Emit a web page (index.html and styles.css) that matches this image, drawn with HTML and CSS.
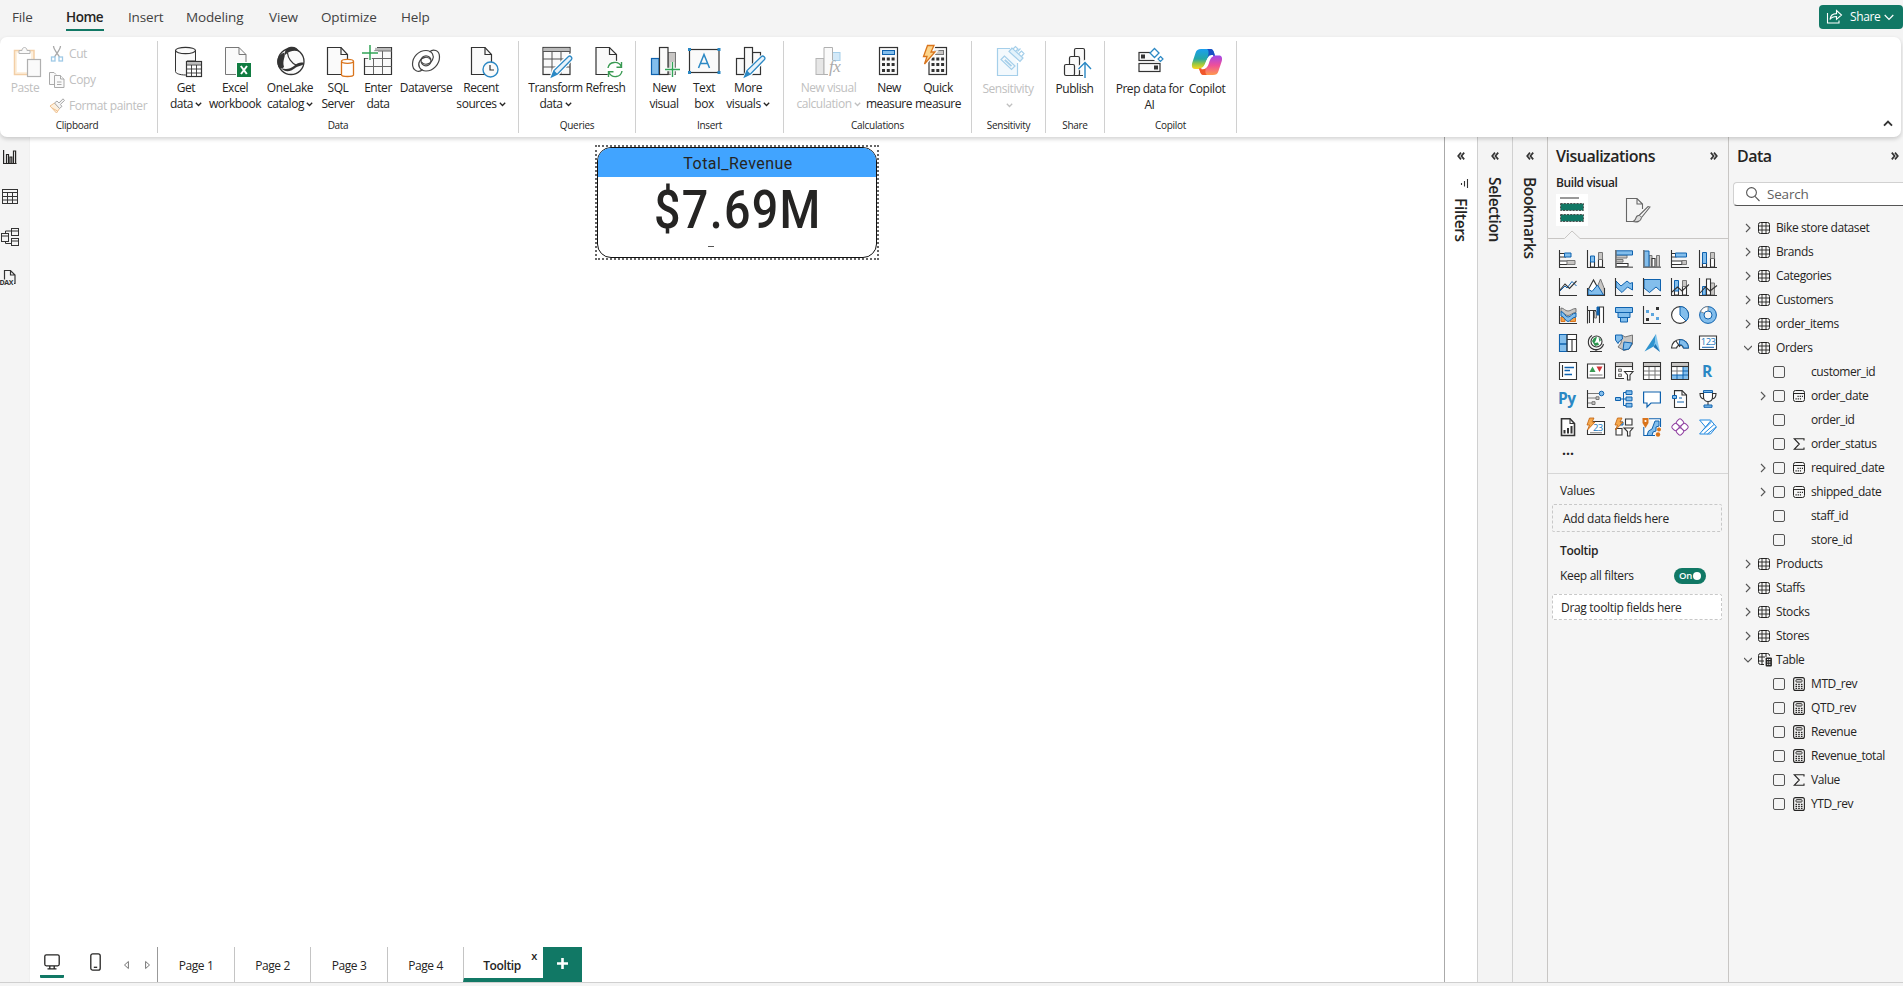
FILE: index.html
```html
<!DOCTYPE html>
<html lang="en">
<head>
<meta charset="utf-8">
<title>Report</title>
<link rel="stylesheet" href="styles.css">
</head>
<body>
<svg class="defs" width="0" height="0">
  <symbol id="chev" viewBox="0 0 7 5"><path d="M.8 .8L3.5 3.5L6.2 .8" fill="none" stroke="currentColor" stroke-width="1.3"/></symbol>
  <symbol id="right" viewBox="0 0 8 10"><path d="M2 1L6 5L2 9" fill="none" stroke="#555" stroke-width="1.1"/></symbol>
  <symbol id="down" viewBox="0 0 8 10"><path d="M0 3L4 7L8 3" fill="none" stroke="#555" stroke-width="1.1"/></symbol>
  <symbol id="dbl" viewBox="0 0 8 8"><path d="M.8 .6L3.6 4L.8 7.4M4 .6L6.8 4L4 7.4" fill="none" stroke="#333" stroke-width="1.7"/></symbol>
  <symbol id="tbl" viewBox="0 0 12 12"><rect x=".5" y=".5" width="11" height="11" rx="2" fill="none" stroke="#252423"/><path d="M4 .5V11.5M8 .5V11.5M.5 4H11.5M.5 8H11.5" stroke="#252423" stroke-width=".9"/></symbol>
  <symbol id="tblcalc" viewBox="0 0 15 14"><path d="M6 11.500H2.500A2 2 0 0 1 .5 9.500V2.500A2 2 0 0 1 2.500 .5H9.500A2 2 0 0 1 11.500 2.500V3M4 .5V11.500M8 .5V4M.5 4H7M.5 8H6" fill="none" stroke="#252423"/><rect x="7.600" y="4.600" width="6.300" height="8.900" rx="1" fill="#252423"/><path d="M9 6.500H12.600M9 9H12.800M9 11.300H12.800" stroke="#f5f5f5" stroke-width="1" stroke-dasharray="1.400 .6"/></symbol>
  <symbol id="cal" viewBox="0 0 12 12"><rect x=".5" y=".5" width="11" height="11" rx="2" fill="none" stroke="#252423"/><path d="M.5 3.500H11.500" stroke="#252423"/><path d="M4.500 6.300H10M2.500 8.800H8" stroke="#252423" stroke-width="1.200" stroke-dasharray="1.200 1"/></symbol>
  <symbol id="calc" viewBox="0 0 12 14"><rect x=".6" y=".6" width="10.800" height="12.800" rx="2" fill="none" stroke="#252423" stroke-width="1.100"/><rect x="3" y="2.700" width="6" height="2.300" rx=".6" fill="none" stroke="#252423"/><path d="M2.500 7.300H9.500M2.500 9.300H9.500M2.500 11.300H9.500" stroke="#252423" stroke-width="1.200" stroke-dasharray="1.600 1.100"/></symbol>
  <symbol id="sum" viewBox="0 0 12 12"><path d="M11 2.500V.7H1.200L6.300 6L1.200 11.300H11V9.500" fill="none" stroke="#252423" stroke-width="1.100"/></symbol>
</svg>

<header class="menu">
  <nav class="menu-tabs">
    <span class="menu-tab t-file">File</span><span class="menu-tab t-home">Home</span><span class="menu-tab t-insert">Insert</span><span class="menu-tab t-modeling">Modeling</span><span class="menu-tab t-view">View</span><span class="menu-tab t-optimize">Optimize</span><span class="menu-tab t-help">Help</span>
  </nav>
  <div class="share">
    <svg width="17" height="16" viewBox="0 0 17 16" fill="none" stroke="#fff" stroke-width="1.100"><path d="M1.500 4V14H13V11.500"/><path d="M4 10.500C4.500 6.500 7 4.600 10.500 4.600V1.500L15.500 6L10.500 10.300V7.500C7.500 7.500 5.500 8.300 4 10.500Z"/></svg>
    <span>Share</span>
    <svg width="10" height="7" viewBox="0 0 10 7"><path d="M.7 1L5 5.400L9.300 1" fill="none" stroke="#fff" stroke-width="1.200"/></svg>
  </div>
</header>

<section class="ribbon">
  <div class="group g-clip">
    <div class="items">
      <div class="item w50 off"><svg class="ico" viewBox="0 0 32 32"><rect x="5.500" y="4.500" width="19.500" height="24" fill="#fdf0de" stroke="#f3cfa6" stroke-width="1.500"/><rect x="8" y="7" width="14" height="19" fill="#fff"/><path d="M10 7.500V4.500H13C13 .5 18 .5 18 4.500H21V7.500Z" fill="#fafafa" stroke="#b5b5b5"/><rect x="18.500" y="13.500" width="13" height="17" fill="#fafafa" stroke="#b0b0b0" stroke-width="1.200"/></svg>Paste</div>
      <div class="clip-list off">
        <div class="clip-row"><svg width="16" height="16" viewBox="0 0 16 16" fill="none"><path d="M4.500 0C4.500 3 8 7 10.500 11M11.500 0C11.500 3 8 7 5.500 11" stroke="#a9a9a9" stroke-width="1.300"/><rect x="2.500" y="11" width="3.500" height="4" stroke="#9ec9e6" stroke-width="1.300"/><rect x="10" y="11" width="3.500" height="4" stroke="#9ec9e6" stroke-width="1.300"/></svg>Cut</div>
        <div class="clip-row"><svg width="16" height="16" viewBox="0 0 16 16" fill="#fafafa" stroke="#a9a9a9"><path d="M5 12.500H.5V.5H5L7 2.500"/><path d="M5.500 3.500H11.500L15 7V15.500H5.500Z"/><path d="M11.500 3.500V7H15M8 10H12.500M8 12.500H12.500"/></svg>Copy</div>
        <div class="clip-row"><svg width="16" height="16" viewBox="0 0 16 16"><path d="M1 8L5.500 5L10.500 10.500L7.500 15Z" fill="#fdf0de" stroke="#efc08e"/><path d="M3 10L8.500 13" stroke="#efc08e"/><path d="M5.500 5L8 3L10 5L14 .8L15.500 2.500L11.300 6.500L13 8.300L10.500 10.500Z" fill="#f5f5f5" stroke="#a9a9a9"/></svg>Format painter</div>
      </div>
    </div>
    <div class="glabel">Clipboard</div>
  </div>

  <div class="group g-data">
    <div class="items">
      <div class="item w40"><svg class="ico" viewBox="0 0 32 32"><path d="M5.500 4.500V25.500C5.500 27.500 10 29 15.500 29H17V15H25.500V4.500" fill="#fafafa" stroke="#333"/><ellipse cx="15.500" cy="4.500" rx="10" ry="3.200" fill="#fafafa" stroke="#333" stroke-width="1.200"/><rect x="16.500" y="15.500" width="15" height="15" fill="#fff" stroke="#333" stroke-width="1.200"/><path d="M17 17.300H31" stroke="#bbb" stroke-width="2.500"/><path d="M17 19H31M17 23H31M17 27H31M21.500 19V30M26.500 19V30" stroke="#333" stroke-width=".9"/></svg>Get<br><span>data<svg class="cv"><use href="#chev"/></svg></span></div>
      <div class="item w58"><svg class="ico" viewBox="0 0 32 32"><path d="M6.500 1.500H20L27 8.500V28.500H6.500Z" fill="#fafafa" stroke="#777"/><path d="M20 1.500V8.500H27" fill="none" stroke="#777"/><rect x="17" y="16" width="15" height="15" fill="#fff"/><rect x="18" y="17" width="14" height="14" fill="#107c41"/><path d="M21.800 20L27.800 28M28 20L22 28" stroke="#fff" stroke-width="2"/></svg>Excel<br>workbook</div>
      <div class="item w52"><svg class="ico" viewBox="0 0 32 32"><circle cx="17" cy="15.500" r="13" fill="#fafafa" stroke="#333" stroke-width="1.300"/><path d="M11 6C12 2 15 .8 18 .8C21.500 .8 24 2.500 25 5.500C20 4 15.500 5 11 9Z" fill="#333"/><path d="M10.500 6.500C12 11 8 14 10 21C8.500 23 6 22.500 4.500 21C1.500 15 3.500 9 10.500 6.500Z" fill="#333"/><path d="M13.500 7C14 12 17.500 17 22 19" fill="none" stroke="#333" stroke-width="1.200"/><path d="M7 22C12 24 16 23 20 20C24 16.500 27 16 30 17C29.500 20 24 19.500 20.500 22.500C17 25.500 11 27 7 22Z" fill="#333"/></svg>OneLake<br><span>catalog<svg class="cv"><use href="#chev"/></svg></span></div>
      <div class="item w44"><svg class="ico" viewBox="0 0 32 32"><path d="M5.500 1.500H19L25.500 8.500V28.500H5.500Z" fill="#fafafa" stroke="#333" stroke-width="1.200"/><path d="M19 1.500V8.500H25.500" fill="none" stroke="#333" stroke-width="1.200"/><path d="M19.500 15.500V29C20 31 31 31 31.500 29V15.500" fill="#fff" stroke="#d9741c" stroke-width="1.300"/><ellipse cx="25.500" cy="15.300" rx="6" ry="2" fill="#fff" stroke="#d9741c" stroke-width="1.300"/></svg>SQL<br>Server</div>
      <div class="item w36"><svg class="ico" viewBox="0 0 32 32"><path d="M2.500 12V28.500H29.500V1.500H15" fill="#fafafa" stroke="#333" stroke-width="1.200"/><path d="M13 3.300H29" stroke="#bbb" stroke-width="3"/><path d="M12 5H30M3 12.500H29.500M3 20.500H29.500M11.500 12V28M20.500 5V28" stroke="#666" stroke-width="1"/><path d="M0 7H16M8 -1V14" stroke="#fff" stroke-width="3.500"/><path d="M0 7H16M8 -1V14" stroke="#32a457" stroke-width="1.500"/></svg>Enter<br>data</div>
      <div class="item w60"><svg class="ico" viewBox="0 0 32 32" fill="none" stroke="#444" stroke-width="1.200"><path d="M19.500 6C23 2.500 29.500 4 29.500 11C29.500 18 23.500 25 16 25C9.500 25 7.500 19 9.500 15.500C12 10.500 18 10 20.500 13.500"/><path d="M12.500 23.500C9 27 2.500 25 2.500 18C2.500 11 8.500 4.500 16 4.500C22.500 4.500 24.500 10 22.500 13.800C20 19 14 19.500 11.500 16"/><circle cx="16" cy="14.800" r="5"/></svg>Dataverse</div>
      <div class="item w50"><svg class="ico" viewBox="0 0 32 32"><path d="M6.500 1.500H20L26.500 8.500V28.500H6.500Z" fill="#fafafa" stroke="#333" stroke-width="1.200"/><path d="M20 1.500V8.500H26.500" fill="none" stroke="#333" stroke-width="1.200"/><circle cx="25.500" cy="23.500" r="7.500" fill="#fafafa" stroke="#2b88c4" stroke-width="1.400"/><path d="M25 19V24H29" fill="none" stroke="#333" stroke-width="1.200"/></svg>Recent<br><span>sources<svg class="cv"><use href="#chev"/></svg></span></div>
    </div>
    <div class="glabel">Data</div>
  </div>

  <div class="group g-queries">
    <div class="items">
      <div class="item w55"><svg class="ico" viewBox="0 0 32 32"><rect x="3" y="1.500" width="27" height="27" fill="#fafafa" stroke="#333" stroke-width="1.200"/><path d="M3.500 3.500H29.500" stroke="#bbb" stroke-width="3.500"/><path d="M3 5.500H30M3 13H30M3 21H30M12 5.500V28M21 5.500V28" stroke="#555" stroke-width="1"/><path d="M31 9C32.500 10 33 12 31.500 13.500L17.500 28.500L11 31.500L13.500 24.500L28 10Z" fill="#fff" stroke="#fff" stroke-width="3"/><path d="M28.500 10.500C30 9 33 11.500 31.500 13.500L17.500 28L11.500 31L14 24.500Z" fill="#e8f3fb" stroke="#2b88c4" stroke-width="1.300"/><path d="M14 24.500L17.500 28L11.500 31Z" fill="#2b88c4"/></svg>Transform<br><span>data<svg class="cv"><use href="#chev"/></svg></span></div>
      <div class="item w45"><svg class="ico" viewBox="0 0 32 32"><path d="M6 1.500H19.500L26.500 8.500V28.500H6Z" fill="#fafafa" stroke="#333" stroke-width="1.200"/><path d="M19.500 1.500V8.500H26.500" fill="none" stroke="#333" stroke-width="1.200"/><circle cx="25" cy="23.500" r="9" fill="#fff"/><path d="M18 22C19 15.500 28.500 14 31.500 21M31.500 16V21.200H26.500M32 25C31 31.500 22 33 18.500 26M18.500 31V25.800H23.500" fill="none" stroke="#3a9a53" stroke-width="1.400"/></svg>Refresh</div>
    </div>
    <div class="glabel">Queries</div>
  </div>

  <div class="group g-insert">
    <div class="items">
      <div class="item w40"><svg class="ico" viewBox="0 0 32 32"><rect x="3.500" y="12.500" width="7.500" height="16" fill="#83beec" stroke="#0f62ae" stroke-width="1.200"/><rect x="20" y="6.500" width="7.500" height="22" fill="#c8c6c4" stroke="#777"/><rect x="11.500" y="1.500" width="8.500" height="27" fill="#fafafa" stroke="#333" stroke-width="1.200"/><path d="M17 23.500H32M24.500 16V31" stroke="#fff" stroke-width="3.500"/><path d="M17 23.500H32M24.500 16V31" stroke="#32a457" stroke-width="1.400"/></svg>New<br>visual</div>
      <div class="item w40"><svg class="ico" viewBox="0 0 32 32"><rect x="1.500" y="3.500" width="29.500" height="23" fill="#fafafa" stroke="#333" stroke-width="1.200"/><path d="M0 2h3v3h-3zM29.500 2h3v3h-3zM0 25h3v3h-3zM29.500 25h3v3h-3z" fill="#2b88c4"/><path d="M10.500 22L16 8.500L21.500 22M12.300 17.500H19.700" fill="none" stroke="#2b88c4" stroke-width="1.500"/></svg>Text<br>box</div>
      <div class="item w48"><svg class="ico" viewBox="0 0 32 32"><rect x="4.500" y="12.500" width="8" height="16" fill="#fafafa" stroke="#333" stroke-width="1.200"/><rect x="20.500" y="6.500" width="8" height="22" fill="#fafafa" stroke="#333" stroke-width="1.200"/><rect x="12.500" y="1.500" width="8" height="27" fill="#fafafa" stroke="#333" stroke-width="1.200"/><path d="M29.500 10.500L15 25L12.500 31L18.500 28.500L33 13.500Z" fill="#fff" stroke="#fff" stroke-width="3"/><path d="M29.500 10.500C31 9 34 11.500 32.500 13.500L18.500 28L12.500 31L15 24.500Z" fill="#e8f3fb" stroke="#2b88c4" stroke-width="1.300"/><path d="M15 24.500L18.500 28L12.500 31Z" fill="#2b88c4"/></svg>More<br><span>visuals<svg class="cv"><use href="#chev"/></svg></span></div>
    </div>
    <div class="glabel">Insert</div>
  </div>

  <div class="group g-calc">
    <div class="items">
      <div class="item w71 off"><svg class="ico" viewBox="0 0 32 32"><rect x="3" y="12.500" width="8" height="16" fill="#e6e6e6" stroke="#b5b5b5"/><rect x="19.500" y="6.500" width="7.500" height="8" fill="#d3e9f8" stroke="#a5cfea"/><path d="M19.500 14V1.500H11V28.500H15" fill="#fafafa" stroke="#b0b0b0"/><text class="fx" x="16" y="26">fx</text></svg>New visual<br><span>calculation<svg class="cv"><use href="#chev"/></svg></span></div>
      <div class="item w50"><svg class="ico" viewBox="0 0 32 32"><rect x="6.500" y="1.500" width="18" height="27" fill="#fafafa" stroke="#333" stroke-width="1.200"/><rect x="9.500" y="4.500" width="12" height="4" fill="#83beec" stroke="#0f62ae"/><path d="M9 13H23M9 18.500H23M9 24.500H23" stroke="#333" stroke-width="3" stroke-dasharray="3 1.800"/></svg>New<br>measure</div>
      <div class="item w48"><svg class="ico" viewBox="0 0 32 32"><rect x="7" y="1.500" width="17.500" height="27" fill="#fafafa" stroke="#333" stroke-width="1.200"/><rect x="12" y="4.500" width="9.500" height="4" fill="#c8c6c4" stroke="#777"/><path d="M9.500 13H23.500M9.500 18.500H23.500M9.500 24.500H23.500" stroke="#333" stroke-width="3" stroke-dasharray="3 1.800"/><path d="M5.500 -.5H12L9 6H13L2.500 18L5 10.500H1.500Z" fill="#fde0a4" stroke="#fff" stroke-width="3.500"/><path d="M5.500 -.5H12L9 6H13L2.500 18L5 10.500H1.500Z" fill="#fcd58c" stroke="#d9741c" stroke-width="1.300"/></svg>Quick<br>measure</div>
    </div>
    <div class="glabel">Calculations</div>
  </div>

  <div class="group g-sens">
    <div class="items">
      <div class="item w56 off low"><svg class="ico" viewBox="0 0 32 32" fill="#f3f9fd" stroke="#a5cfea" stroke-width="1.200"><path d="M18 2.500H5.500V29.500H25.500V17"/><path d="M12.500 10L9 13.500L19.500 23.500L23 20Z"/><path d="M12.800 13.800L19.500 20.200" stroke-width="1.800"/><path d="M20 2L17 5.500L28 15.500L31 12Z" fill="#e3f2fb"/><path d="M21 3L23.500 .5L26 3L23.500 5.500M29.500 10.500L32 7.500L29.500 5L27 7.500M25.500 5.500L28.500 2.500" fill="none"/></svg>Sensitivity<br><svg class="cv"><use href="#chev"/></svg></div>
    </div>
    <div class="glabel">Sensitivity</div>
  </div>

  <div class="group g-share">
    <div class="items">
      <div class="item w45 low"><svg class="ico" viewBox="0 0 32 32"><rect x="15.500" y="2.500" width="10" height="27" rx="1.500" fill="#fafafa" stroke="#333" stroke-width="1.200"/><rect x="10.500" y="10.500" width="10" height="19" rx="1.500" fill="#fafafa" stroke="#333" stroke-width="1.200"/><rect x="5.500" y="18.500" width="10" height="11" rx="1.500" fill="#fafafa" stroke="#333" stroke-width="1.200"/><path d="M26 16V32M19.500 23L26 16.500L32 23" fill="none" stroke="#fff" stroke-width="4"/><path d="M26 16V32M19.500 23L26 16.500L32 23" fill="none" stroke="#2b88c4" stroke-width="1.400"/></svg>Publish</div>
    </div>
    <div class="glabel">Share</div>
  </div>

  <div class="group g-copilot">
    <div class="items">
      <div class="item w73 low"><svg class="ico" viewBox="0 0 32 32"><rect x="5" y="6.500" width="21" height="8" fill="#fafafa" stroke="#333" stroke-width="1.200"/><rect x="5" y="17.500" width="21" height="8" fill="#fafafa" stroke="#333" stroke-width="1.200"/><path d="M7 8.500h4v4h-4zM20 19.500h4v4h-4z" fill="#333"/><path d="M16 1h14v14h-9l-5-5z" fill="#fff"/><path d="M20.500 2.500L25 7L20.500 11.500L16 7Z" fill="#fff" stroke="#2b88c4" stroke-width="1.300"/><path d="M26.500 10.500L29 13L26.500 15.500L24 13Z" fill="#fff" stroke="#2b88c4" stroke-width="1.200"/></svg>Prep data for<br>AI</div>
      <div class="item w42 low"><svg class="ico" viewBox="0 0 32 32"><defs><linearGradient id="cpa" x1="0" y1="0" x2="0" y2="1"><stop offset="0" stop-color="#1a9ff0"/><stop offset=".5" stop-color="#24a7a5"/><stop offset=".75" stop-color="#9cc83f"/><stop offset="1" stop-color="#ffd51e"/></linearGradient><linearGradient id="cpb" x1="0" y1="0" x2="0" y2="1"><stop offset="0" stop-color="#a348ea"/><stop offset=".5" stop-color="#ee4f9a"/><stop offset="1" stop-color="#ff9a4d"/></linearGradient></defs><path d="M10 3H19C21.500 3 22.500 5 23 7L24 10H20C17 10 16 13 15 16.500C13.500 21 12.500 23 9 23H4C1 23 .5 20 1.200 17L4.500 7C5.500 4 7 3 10 3Z" fill="url(#cpa)"/><path d="M16 3H19.500C22 3 22.500 5 23.200 7L24 10H20C18 10 17 11 16.500 12C18 8 18 4 16 3Z" fill="#1a4fc4"/><path d="M22 29H13C10.500 29 9.500 27 9 25L8 22.500H12C15 22 16 19 17 15.500C18.500 11 19.500 9.500 23 9.500H28C31 9.500 31.500 12 30.800 15L27.500 25C26.500 28 25 29 22 29Z" fill="url(#cpb)"/><path d="M16 29H12.500C10 29 9.500 27 8.800 25L8 22.500H12C14 22.500 15 21 15.500 20C14 24 14 28 16 29Z" fill="#f0562b"/><path d="M17.500 12C18 10.500 19 9.800 20.500 9.800H22C19 10.500 18.500 13 17.500 16C16.500 20 15.500 22.300 12 22.500H10.500C13.500 22 14.500 19 15.500 16Z" fill="#fff" stroke="#fff" stroke-width="1.500"/></svg>Copilot</div>
    </div>
    <div class="glabel">Copilot</div>
  </div>
  <svg class="collapse" width="10" height="7" viewBox="0 0 10 7"><path d="M1 5.700L5 1.700L9 5.700" fill="none" stroke="#333" stroke-width="1.900"/></svg>
</section>

<main class="work">
  <nav class="rail">
    <svg width="14" height="15" viewBox="0 0 14 15" fill="none" stroke="#252423" stroke-width="1.200"><path d="M.6 0V13.500H13.500"/><path d="M3.500 13.500V4.500H5.500V13.500M7 13.500V7H8.800V13.500M10.500 13.500V1H12.600V13.500"/></svg>
    <svg width="16" height="15" viewBox="0 0 16 15" fill="none" stroke="#333"><rect x=".5" y=".5" width="15" height="14"/><path d="M.5 3.500H15.500M.5 7.500H15.500M.5 11H15.500M5.500 3.500V14.500M10.500 3.500V14.500"/></svg>
    <svg width="18" height="18" viewBox="0 0 18 18" fill="none" stroke="#333"><rect x=".5" y="5.500" width="7" height="8"/><rect x="10.500" y=".5" width="7" height="7"/><rect x="10.500" y="10.500" width="7" height="7"/><path d="M.5 8H7.500M10.500 3H17.500M10.500 13H17.500M4.500 5.500V3H10.500M4.500 13.500V15.500H10.500"/></svg>
    <svg width="17" height="17" viewBox="0 0 17 17"><path d="M4.500 10.500V1.500H10.500L15 6V14.500H14M10.500 1.500V6H15" fill="none" stroke="#333" stroke-width="1.200"/><text class="dax" x="-.5" y="16">DAX</text></svg>
  </nav>
  <div class="stage">
    <div class="canvas">
      <div class="visual">
        <div class="card">
          <div class="card-title">Total_Revenue</div>
          <div class="card-value">$7.69M</div>
          <div class="card-dash"></div>
        </div>
      </div>
    </div>
    <footer class="pages">
      <div class="view desktop"><svg width="16" height="16" viewBox="0 0 16 16" fill="none" stroke="#252423" stroke-width="1.300"><rect x=".8" y=".8" width="14.400" height="11" rx="1.500"/><path d="M3.500 14.800H12.500M5.800 12V14.500M10.200 12V14.500"/></svg></div>
      <div class="view"><svg width="11" height="18" viewBox="0 0 11 18" fill="none" stroke="#252423" stroke-width="1.300"><rect x=".8" y=".8" width="9.400" height="16.400" rx="2"/><path d="M3.800 14.300H7.200"/></svg></div>
      <div class="arrows"><svg width="5" height="8" viewBox="0 0 5 8"><path d="M4.400 .5V7.500L.5 4Z" fill="none" stroke="#666" stroke-width=".9"/></svg><svg width="5" height="8" viewBox="0 0 5 8"><path d="M.6 .5V7.500L4.500 4Z" fill="none" stroke="#666" stroke-width=".9"/></svg></div>
      <div class="page first w77">Page 1</div><div class="page">Page 2</div><div class="page w77">Page 3</div><div class="page">Page 4</div>
      <div class="page active">Tooltip<span class="close">x</span></div>
      <div class="add"><svg width="11" height="11" viewBox="0 0 11 11"><path d="M5.500 0V11M0 5.500H11" stroke="#fff" stroke-width="2.600"/></svg></div>
    </footer>
  </div>
  <aside class="slim white"><svg class="dbl flip"><use href="#dbl"/></svg><svg class="filt" width="9" height="9" viewBox="0 0 9 9"><path d="M7.500 0V9M4.500 2V7.500M1.500 4V6" stroke="#333" stroke-width="1.100"/></svg><span class="v-filters">Filters</span></aside>
  <aside class="slim"><svg class="dbl flip"><use href="#dbl"/></svg><span class="v-selection">Selection</span></aside>
  <aside class="slim"><svg class="dbl flip"><use href="#dbl"/></svg><span class="v-bookmarks">Bookmarks</span></aside>

  <aside class="viz">
    <div class="pane-head"><span class="h-viz">Visualizations</span><svg class="dbl"><use href="#dbl"/></svg></div>
    <div class="build">Build visual</div>
    <div class="modes">
      <div class="mode on"><svg width="24" height="26" viewBox="0 0 24 26"><path d="M0 1H19" stroke="#555" stroke-width="1.200"/><rect x=".6" y="6.600" width="22.800" height="6.800" fill="#117865" stroke="#444" stroke-dasharray="2 1.200"/><rect x=".6" y="17.600" width="22.800" height="6.800" fill="#117865" stroke="#444" stroke-dasharray="2 1.200"/></svg></div>
      <div class="mode"><svg width="26" height="26" viewBox="0 0 26 26" fill="none" stroke="#666" stroke-width="1.100"><path d="M8 24.500H1.500V1.500H12L17.500 7V12M12 1.500V7H17.500"/><path d="M25 10L16.500 20.500L14 18.500L23 9.500Z"/><path d="M14 18.500C11.500 18 11 20.500 10.500 22C10 23.500 9 24 8 24.500C12 25.500 16 24.500 16.500 20.500" fill="#ddd"/></svg></div>
    </div>
    <svg class="notch" viewBox="0 0 180 9" width="180" height="9"><path d="M0 8.500H16.500L24 1L32 8.500H180" fill="none" stroke="#c8c6c4"/></svg>
    <div class="grid">
      <svg viewBox="0 0 18 18"><path class="wd" d="M1 3.500H6.500V7H1M1 11H8.500V14.500H1"/><path class="b" d="M5.500 3H12V7H5.500Z"/><path class="g" d="M8 10.500H16V14.500H8Z"/><path class="k" d="M.5 0V17.500H18"/></svg>
      <svg viewBox="0 0 18 18"><path class="wd" d="M3.500 11V17H7.500V11M11.500 8.500V17H15.500V8.500"/><path class="b" d="M3.500 6H7.500V12H3.500Z"/><path class="g" d="M11.500 2.500H15.500V9.500H11.500Z"/><path class="k" d="M.5 0V17.500H18"/></svg>
      <svg viewBox="0 0 18 18"><path class="g" d="M1 5H12V8H1Z"/><path class="g" d="M1 9.500H8V12H1Z"/><path class="wd" d="M1 13.500H13V16.500H1Z"/><path class="b" d="M1 .8H17.500V5H1Z"/><path class="gk" d="M.8 0V17.200H18"/></svg>
      <svg viewBox="0 0 18 18"><path class="g" d="M6 5.500H9V17H6Z"/><path class="wd" d="M9 8.500H12V17H9Z"/><path class="g" d="M13.500 5.500H16.500V17H13.500Z"/><path class="b" d="M1 1H6V17H1Z"/><path class="gk" d="M.8 0V17.200H18"/></svg>
      <svg viewBox="0 0 18 18"><path class="wd" d="M1 3.500H5V7H1M1 11H11V14.500H1"/><path class="b" d="M4.500 3H15.500V7H4.500Z"/><path class="g" d="M11 10.500H15.500V14.500H11Z"/><path class="k" d="M.5 0V17.500H18"/></svg>
      <svg viewBox="0 0 18 18"><path class="wd" d="M3.500 12V17H7.500V12M11.500 8V17H15.500V8"/><path class="b" d="M3.500 2.500H7.500V13.500H3.500Z"/><path class="g" d="M11.500 2.500H15.500V8.500H11.500Z"/><path class="k" d="M.5 0V17.500H18"/></svg>

      <svg viewBox="0 0 18 18"><path class="bl" d="M1 13L6 8L8 10L13 3.500L17.500 8"/><path class="k" d="M1 12L6 6L10.500 10.500L17.500 3"/><path class="k" d="M.5 0V17.500H18"/></svg>
      <svg viewBox="0 0 18 18"><path class="g" d="M9 12L13.500 1L17.500 11V17H9Z"/><path class="wd" d="M1 12L6.500 2L12 12V17H1Z"/><path class="b" d="M1 11L5 13.500L10.500 7L16.500 17H1Z"/><path class="k" d="M.5 10V17.500H17.500V10"/></svg>
      <svg viewBox="0 0 18 18"><path class="b" d="M1 3L6 8L12 3L15 5.500L17.500 4.500V12L12.500 9L7 14.500L1 9Z"/><path class="k" d="M.5 0V17.500H18"/></svg>
      <svg viewBox="0 0 18 18"><path class="b" d="M1 1.500H17.500V13L13 9L6.500 14.500L1 10Z"/><path class="k" d="M.5 0V17.500H18"/></svg>
      <svg viewBox="0 0 18 18"><path class="wd" d="M3.500 12V17H7.500V12M11.500 8V17H15.500V8"/><path class="b" d="M3.500 2.500H7.500V13H3.500Z"/><path class="g" d="M11.500 2.500H15.500V8.500H11.500Z"/><path class="k" d="M.5 0V17.500H18M1 14L6.500 9L11 13L18 6.500"/></svg>
      <svg viewBox="0 0 18 18"><path class="b" d="M3.500 8.500H7V17H3.500Z"/><path class="g" d="M11.500 5H15.500V17H11.500Z"/><path class="wd" d="M7.500 1H11.500V17H7.500Z"/><path class="k" d="M.5 0V17.500H18M1 15L6.500 9L11 13L18 7.500"/></svg>

      <svg viewBox="0 0 18 18"><path fill="#f2a14a" stroke="#d9741c" d="M2 11H6V15.500H2ZM11 11.500H16.500V15.500H11Z"/><path class="g" d="M2 2C5 2 6 5 9 5S13 2.500 17 2.500V6.500C13 6.500 12 9.500 9 9.500S5 6.500 2 6.500Z"/><path class="b" d="M2 5.500C5 5.500 6 11 9 11S13 7 17 7V11C13 11 11.500 15.500 9 15.500S5 10 2 10Z"/><path class="k" d="M.5 0V17.500H18"/></svg>
      <svg viewBox="0 0 18 18"><path class="wd" d="M2.500 17V4.500H6.500V17M12.500 17V1H16.500V17"/><path class="g" d="M7.500 5.500H9.500V12H7.500Z"/><path class="bd" d="M10 1H12V9H10Z"/><path class="k" d="M.5 0V17.500M6.500 4.500H9M1 4.500H3"/></svg>
      <svg viewBox="0 0 18 18"><path class="b" d="M.5 1.500H17.500V6.500H.5ZM3 6.500H15V11.500H3ZM5.500 11.500H12.500V16H5.500Z"/></svg>
      <svg viewBox="0 0 18 18"><path fill="#5aa5de" d="M3 4h3v3h-3zM8 7h3v3h-3zM13 11h3v3h-3z"/><path fill="#333" d="M13 1h3v3h-3zM3 12h3v3h-3z"/><path class="k" d="M.5 0V17.500H18"/></svg>
      <svg viewBox="0 0 18 18"><circle class="wd" cx="9" cy="9" r="8.400"/><path class="b" d="M9 .6A8.400 8.400 0 0 1 15 15L9 9Z"/></svg>
      <svg viewBox="0 0 18 18"><circle cx="9" cy="9" r="8.400" class="b"/><path d="M9 9L1.500 5.500C3 2.500 5.500 .8 9 .6Z" fill="#fff" stroke="#777" stroke-width=".8"/><circle cx="9" cy="9" r="4" fill="#f5f5f5" stroke="#0f62ae"/></svg>

      <svg viewBox="0 0 18 18"><path class="wd" d="M.5 .5H17.500V17.500H.5Z"/><path class="b" d="M.5 .5H8V10H.5ZM.5 10H8V17.500H.5Z"/><path class="k" d="M8 .5V17.500M8 5.500H17.500M13 5.500V17.500"/></svg>
      <svg viewBox="0 0 18 18"><circle class="wd" cx="9.500" cy="7.500" r="5.500"/><path fill="#2e9650" d="M7 4L10 2.500L9 6L7.500 9L11 8.500L12 11L8 12L5 7ZM11.500 3L14 6L12.500 8Z"/><path class="k" d="M5 1.500A7.700 7.700 0 1 0 16.500 10M9 15V17.500M3 17.500H15"/></svg>
      <svg viewBox="0 0 18 18"><path class="g" d="M7 1L10 3L17.500 1V10L14 15L9 16.500L3 13L6 9Z"/><path class="b" d="M.5 1H7L7.500 5L4.500 7L3 9.500L.5 6ZM9 8L17 9L14 15L8 16Z"/></svg>
      <svg viewBox="0 0 18 18"><path fill="#2e93cf" d="M13 0L1.500 17.500L11.500 12Z"/><path fill="#83c7ef" d="M13 0L17 18L11.500 12Z"/><path fill="#2175b5" d="M12.500 10L17 18L10.500 13Z"/></svg>
      <svg viewBox="0 0 18 18"><path class="wd" d="M.5 14A8.500 8.500 0 0 1 17.500 14H12.500A3.600 3.600 0 0 0 5.500 14Z"/><path class="b" d="M9 5.500A8.500 8.500 0 0 1 17.500 14H12.500A3.600 3.600 0 0 0 8 10.600Z"/><path class="k" d="M5 7L9 13"/></svg>
      <svg viewBox="0 0 18 18"><path class="wd" d="M.5 2H17.500V15.500H.5Z"/><text class="num" x="1.800" y="11.300">123</text><path class="bl" d="M3 13.300H15"/></svg>

      <svg viewBox="0 0 18 18"><path class="wd" d="M.5 .5H17.500V17.500H.5Z"/><path class="k" d="M3.500 3V15"/><path d="M5.500 5.500H15M5.500 8.500H11M5.500 12.500H13" stroke="#0f62ae" stroke-width="1.500"/></svg>
      <svg viewBox="0 0 18 18"><path class="wd" d="M.5 2H17.500V16H.5Z"/><path fill="#3a9a53" d="M5.500 4.500L8.500 10H2.500Z"/><path fill="#d13438" d="M9.500 4.500H15.500L12.500 10Z"/><path class="gl" d="M2.500 13H15.500"/></svg>
      <svg viewBox="0 0 18 18"><path class="wd" d="M9 16.500H.5V.8H17.500V8"/><path d="M1 2.500H17" stroke="#c8c6c4" stroke-width="2.500"/><path class="k" d="M.5 4.500H17.500"/><path class="g" d="M3.500 7H6.500V9.500H3.500ZM3.500 12H6.500V14.500H3.500Z"/><path class="wd" d="M9.500 9.500H18L15 13V18H12.500V13Z"/></svg>
      <svg viewBox="0 0 18 18"><path class="wd" d="M.5 .5H17.500V17.500H.5Z"/><path d="M1 2.500H17" stroke="#c8c6c4" stroke-width="3"/><path class="k" d="M.5 4.500H17.500"/><path class="gl" d="M1 9H17M1 13H17M6 5V17M12 5V17"/></svg>
      <svg viewBox="0 0 18 18"><path class="wd" d="M.5 .5H17.500V17.500H.5Z"/><path d="M1 2.500H17" stroke="#c8c6c4" stroke-width="3"/><path fill="#83beec" d="M12 5H17V17H1V13H12Z"/><path class="k" d="M.5 4.500H17.500"/><path class="gl" d="M1 9H12M6 5V13"/><path class="bl" d="M12 5V17M12 9H17M1 13H17M6 13V17"/></svg>
      <svg viewBox="0 0 18 18"><text class="code" x="3" y="14.500">R</text></svg>

      <svg viewBox="0 0 18 18"><text class="code" x="-1" y="14">Py</text></svg>
      <svg viewBox="0 0 18 18"><path class="k" d="M.5 0V17.500H18"/><path class="gl" d="M1 3.500H13M1 8H9M1 13H5"/><circle class="b" cx="14.500" cy="3.500" r="2.300"/><path class="g" d="M9 6.800H12V9.500H9ZM5 11.700H8V14.500H5Z"/></svg>
      <svg viewBox="0 0 18 18"><path class="bl" d="M5.500 9H11M8.500 2.500V15.500M8.500 2.500H11M8.500 15.500H11"/><path class="b" d="M.5 7.500H5.500V10.500H.5ZM11 .8H17V4.500H11ZM11 7H17V10.800H11ZM11 13.300H17V17H11Z"/></svg>
      <svg viewBox="0 0 18 18"><path d="M.6 2H17.400V13H8L4 17V13H.6Z" fill="#fff" stroke="#0f62ae" stroke-width="1.200"/></svg>
      <svg viewBox="0 0 18 18"><path class="wd" d="M3.500 .6H11L15.500 5V17.500H3.500Z"/><path class="k" d="M11 .6V5H15.500"/><path class="b" d="M1.500 5.500H5.500V8.500H1.500Z"/><path class="bl" d="M8 8H11M6 12H13"/></svg>
      <svg viewBox="0 0 18 18"><path class="wd" d="M4.500 2H13.500V7C13.500 13 4.500 13 4.500 7ZM4.500 3.500H1C1 7 2 8.500 5 9M13.500 3.500H17C17 7 16 8.500 13 9M9 11.500V15"/><path class="b" d="M4.500 .6H13.500V2.500H4.500ZM5 15H13V17.300H5Z"/></svg>

      <svg viewBox="0 0 18 18"><path d="M2.500 .8H11L15.500 5.500V17.500H2.500Z" fill="#fff" stroke="#333" stroke-width="1.600"/><path d="M11 .8V5.500H15.500" class="k"/><path d="M5.500 12V15.500M9 10V15.500M12.500 8V15.500" stroke="#333" stroke-width="2"/></svg>
      <svg viewBox="0 0 18 18"><path class="wd" d="M6 3.500H17.500V16.500H.5V12"/><text class="num" x="6" y="13">23</text><path class="gl" d="M3 14.800H15"/><path class="bolt" d="M2.500 0H7L5 4H8L.5 12L2.500 7H0Z"/></svg>
      <svg viewBox="0 0 18 18"><path class="wd" d="M10.500 1H17V7H10.500ZM1 10.500H7V17H1ZM9 10H18L15 13.500V18H12.500V13.500Z"/><path class="b" d="M5 4H8V7H5Z"/><path class="bolt" d="M2.500 0H7L5 4H8L.5 12L2.500 7H0Z"/></svg>
      <svg viewBox="0 0 18 18"><path class="wb" d="M6 .8H17.500V9M.8 9V17.500H12"/><path class="b" d="M12 3H16V8L13 9V13L10 14L9 17.500H4L5.500 13L9 11Z"/><path fill="#d9741c" d="M-.5 0H5.500V5L2.500 10L-.5 5Z"/><circle cx="2.500" cy="3" r="1.100" fill="#fff"/><circle cx="16" cy="11.500" r="2" fill="#d9741c"/><circle cx="15" cy="16.500" r="2.200" fill="#d9741c"/></svg>
      <svg viewBox="0 0 18 18" class="pur"><g transform="rotate(45 9 9)"><rect x="2.700" y="2.700" width="6.300" height="6.300" rx="1.800"/><rect x="9" y="2.700" width="6.300" height="6.300" rx="1.800"/><rect x="2.700" y="9" width="6.300" height="6.300" rx="1.800"/><rect x="9" y="9" width="6.300" height="6.300" rx="1.800"/></g></svg>
      <svg viewBox="0 0 18 18" fill="none" stroke="#1f88e0" stroke-width="1.200"><path d="M.6 2H11.500L17.500 9L11.500 16H.6L6.500 9Z" fill="#fff"/><path d="M6.500 9L12 2.500M3 13L12.500 4M5 15.500L15 6.500M8.500 16L17 9"/></svg>
    </div>
    <div class="more">...</div>
    <div class="wells">
      <div class="well-label">Values</div>
      <div class="well w-values">Add data fields here</div>
      <div class="well-title">Tooltip</div>
      <div class="keep"><span>Keep all filters</span><div class="toggle">On<i></i></div></div>
      <div class="well w-drag">Drag tooltip fields here</div>
    </div>
  </aside>

  <aside class="data">
    <div class="pane-head"><span class="h-data">Data</span><svg class="dbl"><use href="#dbl"/></svg></div>
    <div class="search"><svg width="14" height="15" viewBox="0 0 14 15" fill="none" stroke="#555" stroke-width="1.100"><circle cx="5.500" cy="5.500" r="4.900"/><path d="M9 9.300L13.500 14"/></svg>Search</div>
    <div class="tree">
      <div class="row"><svg class="ar"><use href="#right"/></svg><svg class="ti"><use href="#tbl"/></svg>Bike store dataset</div>
      <div class="row"><svg class="ar"><use href="#right"/></svg><svg class="ti"><use href="#tbl"/></svg>Brands</div>
      <div class="row"><svg class="ar"><use href="#right"/></svg><svg class="ti"><use href="#tbl"/></svg>Categories</div>
      <div class="row"><svg class="ar"><use href="#right"/></svg><svg class="ti"><use href="#tbl"/></svg>Customers</div>
      <div class="row"><svg class="ar"><use href="#right"/></svg><svg class="ti"><use href="#tbl"/></svg>order_items</div>
      <div class="row"><svg class="ar"><use href="#down"/></svg><svg class="ti"><use href="#tbl"/></svg>Orders</div>
      <div class="row kid"><span class="ar"></span><i class="cb"></i><span class="ti"></span>customer_id</div>
      <div class="row kid"><svg class="ar"><use href="#right"/></svg><i class="cb"></i><svg class="ti"><use href="#cal"/></svg>order_date</div>
      <div class="row kid"><span class="ar"></span><i class="cb"></i><span class="ti"></span>order_id</div>
      <div class="row kid"><span class="ar"></span><i class="cb"></i><svg class="ti"><use href="#sum"/></svg>order_status</div>
      <div class="row kid"><svg class="ar"><use href="#right"/></svg><i class="cb"></i><svg class="ti"><use href="#cal"/></svg>required_date</div>
      <div class="row kid"><svg class="ar"><use href="#right"/></svg><i class="cb"></i><svg class="ti"><use href="#cal"/></svg>shipped_date</div>
      <div class="row kid"><span class="ar"></span><i class="cb"></i><span class="ti"></span>staff_id</div>
      <div class="row kid"><span class="ar"></span><i class="cb"></i><span class="ti"></span>store_id</div>
      <div class="row"><svg class="ar"><use href="#right"/></svg><svg class="ti"><use href="#tbl"/></svg>Products</div>
      <div class="row"><svg class="ar"><use href="#right"/></svg><svg class="ti"><use href="#tbl"/></svg>Staffs</div>
      <div class="row"><svg class="ar"><use href="#right"/></svg><svg class="ti"><use href="#tbl"/></svg>Stocks</div>
      <div class="row"><svg class="ar"><use href="#right"/></svg><svg class="ti"><use href="#tbl"/></svg>Stores</div>
      <div class="row"><svg class="ar"><use href="#down"/></svg><svg class="tc"><use href="#tblcalc"/></svg>Table</div>
      <div class="row kid"><span class="ar"></span><i class="cb"></i><svg class="ti tall"><use href="#calc"/></svg>MTD_rev</div>
      <div class="row kid"><span class="ar"></span><i class="cb"></i><svg class="ti tall"><use href="#calc"/></svg>QTD_rev</div>
      <div class="row kid"><span class="ar"></span><i class="cb"></i><svg class="ti tall"><use href="#calc"/></svg>Revenue</div>
      <div class="row kid"><span class="ar"></span><i class="cb"></i><svg class="ti tall"><use href="#calc"/></svg>Revenue_total</div>
      <div class="row kid"><span class="ar"></span><i class="cb"></i><svg class="ti"><use href="#sum"/></svg>Value</div>
      <div class="row kid"><span class="ar"></span><i class="cb"></i><svg class="ti tall"><use href="#calc"/></svg>YTD_rev</div>
    </div>
  </aside>
</main>
<div class="status"></div>
</body>
</html>
```
FILE: styles.css
```css
* { box-sizing: border-box; }
body { margin: 0; width: 1903px; height: 986px; overflow: hidden; display: flex; flex-direction: column; background: #f4f4f4; color: #252423; font: 12px/16px "Open Sans", "Noto Sans", sans-serif; letter-spacing: -.4px; }
svg { flex: none; overflow: visible; }
.defs { position: absolute; }

.menu { height: 37px; flex: none; display: flex; justify-content: space-between; background: #f4f4f4; }
.menu-tabs { display: flex; padding-left: 12px; }
.menu-tab { height: 31px; padding-top: 9px; font-size: 13.500px; line-height: 17px; letter-spacing: -.15px; color: #424242; white-space: nowrap; }
.t-file { width: 54px; }
.t-home { width: 38px; margin-right: 24px; font-weight: 600; color: #252423; border-bottom: 2px solid #117865; letter-spacing: -.5px; }
.t-insert { width: 58px; }
.t-modeling { width: 83px; }
.t-view { width: 52px; }
.t-optimize { width: 80px; }
.share { width: 84px; height: 24px; margin-top: 5px; padding-left: 7px; display: flex; align-items: center; background: #117865; color: #fff; border-radius: 4px; font-weight: 500; }
.share span { width: 34px; margin-left: 7px; }

.ribbon { position: relative; z-index: 2; flex: none; width: 1901px; height: 100px; padding-top: 4px; display: flex; background: #fff; border-radius: 7px; box-shadow: 0 2px 4px rgba(0,0,0,.18); }
.group { height: 92px; padding-top: 5px; border-right: 1px solid #d0d0d0; display: flex; flex-direction: column; justify-content: space-between; }
.items { display: flex; }
.item { height: 68px; text-align: center; white-space: nowrap; letter-spacing: -.45px; }
.ico { display: block; width: 32px; height: 32px; margin: 0 auto 2px; }
.low .ico { margin-bottom: 3px; }
.off { color: #c0c0c0; }
.cv { width: 7px; height: 5px; margin-left: 2px; vertical-align: 1px; }
.glabel { height: 14px; font-size: 10px; line-height: 13px; text-align: center; letter-spacing: -.3px; }
.g-clip { width: 158px; } .g-clip .glabel { padding-right: 3px; }
.g-data { width: 361px; padding-left: 8px; } .g-data .glabel { padding-right: 8px; }
.g-queries { width: 117px; padding-left: 9px; } .g-queries .glabel { padding-right: 9px; }
.g-insert { width: 148px; padding-left: 8px; } .g-insert .glabel { padding-right: 8px; }
.g-calc { width: 188px; padding-left: 9px; } .g-calc .glabel { padding-right: 9px; }
.g-sens { width: 74px; padding-left: 8px; } .g-sens .glabel { padding-right: 8px; }
.g-share { width: 59px; padding-left: 6px; } .g-share .glabel { padding-right: 6px; }
.g-copilot { width: 132px; padding-left: 8px; } .g-copilot .glabel { padding-right: 8px; }
.w36 { width: 36px; } .w40 { width: 40px; } .w42 { width: 42px; } .w44 { width: 44px; } .w45 { width: 45px; } .w48 { width: 48px; } .w50 { width: 50px; } .w52 { width: 52px; } .w55 { width: 55px; } .w56 { width: 56px; } .w58 { width: 58px; } .w60 { width: 60px; } .w71 { width: 71px; } .w73 { width: 73px; }
.clip-list { margin: -5px 0 0 -1px; }
.clip-row { height: 26px; display: flex; align-items: center; gap: 4px; white-space: nowrap; }
.fx { font: italic 17px "Liberation Serif", serif; fill: #aaa; }
.collapse { margin: 79px 8px 0 auto; }

.work { flex: 1; display: flex; min-height: 0; }
.rail { width: 30px; padding-top: 13px; border-right: 1px solid #f0f0f0; background: #f4f4f4; display: flex; flex-direction: column; gap: 24px; }
.rail svg { display: block; margin-left: 3px; }
.rail svg:nth-child(2) { margin-left: 2px; }
.rail svg:nth-child(3) { margin-left: 1px; }
.rail svg:nth-child(4) { margin: -1px 0 0 0; }
.dax { font: 700 7px "Open Sans", sans-serif; fill: #333; }
.stage { width: 1414px; display: flex; flex-direction: column; background: #fff; }
.canvas { flex: 1; padding: 8px 0 0 565px; }
.visual { width: 284px; height: 115px; border: 2px dotted #666; }
.card { height: 111px; border: 1px solid #111; border-radius: 14px; overflow: hidden; text-align: center; }
.card-title { height: 29px; line-height: 31px; background: #41a4ff; font-family: Roboto, sans-serif; font-size: 16px; letter-spacing: .45px; padding-left: 2px; }
.card-value { height: 63px; line-height: 67px; font-family: Roboto, sans-serif; font-size: 53px; font-weight: 500; letter-spacing: 1.500px; padding-left: 2px; transform: scaleX(.88); }
.card-dash { width: 6px; height: 1px; margin: 6px 0 0 110px; background: #555; }
.pages { height: 35px; display: flex; }
.view { height: 31px; margin-left: 22px; width: 20px; display: flex; justify-content: center; padding-top: 6px; }
.view.desktop { width: 24px; margin-left: 10px; border-bottom: 3px solid #117865; padding-top: 7px; border-radius: 0 0 1px 1px; }
.arrows { margin-left: 18px; width: 33px; padding-top: 14px; display: flex; gap: 16px; }
.view + .view { margin-left: 21px; margin-right: 1px; }
.page { position: relative; width: 76px; height: 35px; border-left: 1px solid #c4c4c4; text-align: center; line-height: 37px; }
.page.first { border-left-color: #999; }
.page.w77 { width: 77px; }
.page.active { width: 80px; padding-right: 3px; border-bottom: 4px solid #117865; font-weight: 600; letter-spacing: -.4px; }
.close { position: absolute; right: 6px; top: 3px; line-height: 12px; font-size: 11px; }
.add { width: 39px; background: #117865; display: flex; align-items: center; justify-content: center; padding-bottom: 2px; }
.status { flex: none; height: 4px; border-top: 1px solid #cfcfcf; background: #f4f4f4; }
.slim { width: 35px; border-left: 1px solid #d0d0d0; background: #f4f4f4; display: flex; flex-direction: column; align-items: center; padding-top: 15px; font-size: 15.500px; font-weight: 600; letter-spacing: -.35px; }
.slim.white { width: 33px; border-color: #aaa; background: #fff; }
.slim span { writing-mode: vertical-rl; line-height: 20px; margin-top: 17px; margin-right: 1px; white-space: nowrap; }
.slim.white span { margin-top: 10px; }
.dbl { width: 8px; height: 8px; }
.flip { transform: scaleX(-1); }
.filt { margin: 19px 0 0 6px; }

.viz { width: 181px; border-left: 1px solid #c8c6c4; background: #f5f5f5; }
.pane-head { height: 38px; padding: 0 10px 0 8px; display: flex; align-items: center; justify-content: space-between; font-size: 16px; font-weight: 600; letter-spacing: -.5px; }
.build { padding-left: 8px; line-height: 16px; font-weight: 600; }
.modes { display: flex; gap: 34px; margin-top: 3px; padding-left: 8px; }
.mode { width: 32px; height: 32px; display: flex; align-items: center; justify-content: center; }
.mode.on { background: #fff; }
.notch { display: block; margin-top: 4px; }
.grid { display: grid; grid-template-columns: repeat(6, 28px); grid-auto-rows: 28px; padding: 6px 0 0 6px; place-items: center; }
.grid svg { width: 18px; height: 18px; stroke-width: 1; }
.k { fill: none; stroke: #333; stroke-width: 1.100; }
.gk { fill: none; stroke: #777; stroke-width: 1.600; }
.gl { fill: none; stroke: #777; }
.wd { fill: #fff; stroke: #333; stroke-width: 1.100; }
.wb { fill: #fff; stroke: #0f62ae; stroke-width: 1.100; }
.b { fill: #83beec; stroke: #0f62ae; }
.bd { fill: #0f62ae; stroke: #0f62ae; }
.bl { fill: none; stroke: #0f62ae; }
.g { fill: #c8c6c4; stroke: #777; }
.bolt { fill: #f6a94d; stroke: #c05f0c; stroke-width: .8; }
.pur { fill: #fff; stroke: #8f3fa0; }
.num { font: 500 9.500px "Open Sans", sans-serif; fill: #1878bd; letter-spacing: -.6px; stroke: none; }
.code { font: 700 15.500px "Open Sans", sans-serif; fill: #2b88c4; }
.more { height: 32px; padding: 1px 0 0 14px; font-size: 14px; font-weight: 700; line-height: 15px; letter-spacing: 0; }
.wells { border-top: 1px solid #d6d6d6; padding: 9px 6px 0 4px; letter-spacing: -.32px; }
.well-label { padding-left: 8px; }
.well { border: 1px dashed #c8c8c8; border-radius: 2px; padding-left: 10px; }
.w-values { height: 28px; margin-top: 5px; line-height: 28px; }
.well-title { padding-left: 8px; margin-top: 11px; font-weight: 600; }
.keep { padding: 0 16px 0 8px; height: 16px; margin: 9px 0 10px; display: flex; justify-content: space-between; align-items: center; }
.toggle { width: 32px; height: 16px; border-radius: 8px; background: #117865; color: #fff; font-size: 9.500px; font-weight: 600; padding-left: 5px; display: flex; align-items: center; gap: 1px; }
.toggle i { width: 8px; height: 8px; border-radius: 4px; background: #fff; }
.w-drag { height: 26px; line-height: 26px; background: #fff; padding-left: 8px; }

.data { width: 175px; border-left: 1px solid #c8c6c4; background: #f5f5f5; }
.data .pane-head { padding-right: 4px; }
.search { height: 24px; margin: 7px 0 0 4px; padding-left: 12px; display: flex; align-items: center; gap: 7px; background: #fff; border: 1px solid #d1d1d1; border-right: 0; border-bottom-color: #555; border-radius: 4px 0 0 4px; color: #616161; font-size: 13.500px; letter-spacing: -.2px; }
.tree { padding-top: 10px; }
.row { height: 24px; padding-left: 15px; display: flex; align-items: center; white-space: nowrap; }
.row.kid { padding-left: 30px; }
.ar { width: 8px; height: 10px; margin-right: 6px; }
.ti { width: 12px; height: 12px; margin-right: 6px; }
.tall { height: 14px; }
.tc { width: 15px; height: 14px; margin-right: 3px; }
.cb { width: 12px; height: 12px; border: 1px solid #555; border-radius: 2px; margin-right: 8px; }
```
